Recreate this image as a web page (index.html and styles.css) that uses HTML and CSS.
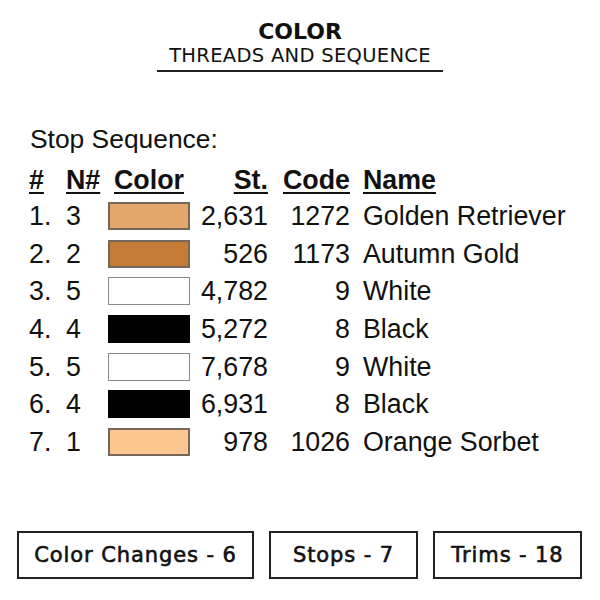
FILE: index.html
```html
<!DOCTYPE html>
<html>
<head>
<meta charset="utf-8">
<link rel="stylesheet" href="styles.css">
</head>
<body>
<div class="page">
  <header class="title">
    <div class="title-main">COLOR</div>
    <div class="title-sub">THREADS AND SEQUENCE</div>
  </header>
  <div class="label">Stop Sequence:</div>
  <div class="table">
    <div class="th c-num">#</div>
    <div class="th c-n">N#</div>
    <div class="th c-color">Color</div>
    <div class="th c-st">St.</div>
    <div class="th c-code">Code</div>
    <div class="th c-name">Name</div>

    <div class="c-num">1.</div><div class="c-n">3</div><div class="c-color"><span class="swatch golden"></span></div><div class="c-st">2,631</div><div class="c-code">1272</div><div class="c-name">Golden Retriever</div>
    <div class="c-num">2.</div><div class="c-n">2</div><div class="c-color"><span class="swatch autumn"></span></div><div class="c-st">526</div><div class="c-code">1173</div><div class="c-name">Autumn Gold</div>
    <div class="c-num">3.</div><div class="c-n">5</div><div class="c-color"><span class="swatch white"></span></div><div class="c-st">4,782</div><div class="c-code">9</div><div class="c-name">White</div>
    <div class="c-num">4.</div><div class="c-n">4</div><div class="c-color"><span class="swatch black"></span></div><div class="c-st">5,272</div><div class="c-code">8</div><div class="c-name">Black</div>
    <div class="c-num">5.</div><div class="c-n">5</div><div class="c-color"><span class="swatch white"></span></div><div class="c-st">7,678</div><div class="c-code">9</div><div class="c-name">White</div>
    <div class="c-num">6.</div><div class="c-n">4</div><div class="c-color"><span class="swatch black"></span></div><div class="c-st">6,931</div><div class="c-code">8</div><div class="c-name">Black</div>
    <div class="c-num">7.</div><div class="c-n">1</div><div class="c-color"><span class="swatch sorbet"></span></div><div class="c-st">978</div><div class="c-code">1026</div><div class="c-name">Orange Sorbet</div>
  </div>
  <div class="stats">
    <div class="stat wide">Color Changes - 6</div>
    <div class="stat">Stops - 7</div>
    <div class="stat">Trims - 18</div>
  </div>
</div>
</body>
</html>
```
FILE: styles.css
```css
html, body {
  margin: 0;
  padding: 0;
  background: #fff;
}
.page {
  width: 600px;
  height: 600px;
  color: #111;
  font-family: "Liberation Sans", Arial, sans-serif;
}
.title {
  width: 286px;
  margin: 0 auto;
  padding-top: 19px;
  padding-bottom: 3px;
  border-bottom: 2px solid #222;
  text-align: center;
  font-family: "DejaVu Sans", sans-serif;
}
.title-main {
  font-size: 22px;
  line-height: 25px;
  font-weight: 700;
}
.title-sub {
  font-size: 19.5px;
  line-height: 23px;
  font-weight: 400;
  letter-spacing: 0.3px;
}
.label {
  margin-top: 52px;
  padding-left: 30px;
  font-size: 26.4px;
  line-height: 30px;
}
.table {
  margin-top: 9px;
  padding-left: 29px;
  display: grid;
  grid-template-columns: 37px 42px 82px 78px 82px 1fr;
  grid-template-rows: 34px;
  grid-auto-rows: 37.7px;
  align-items: center;
  font-size: 26.8px;
  line-height: 30px;
}
.th {
  font-weight: 700;
  text-decoration: underline;
  text-decoration-thickness: 2px;
  text-underline-offset: 3px;
}
.c-color {
  display: flex;
  justify-content: center;
}
.c-st, .c-code {
  text-align: right;
}
.c-name {
  padding-left: 13px;
  white-space: nowrap;
}
.swatch {
  display: block;
  width: 82px;
  height: 28px;
  box-sizing: border-box;
  border: 2px solid #74685a;
}
.golden { background: #e3a66b; }
.autumn { background: #c47b35; }
.white { background: #fff; border-color: #8a8a8a; border-width: 1.5px; }
.black { background: #000; border-color: #000; }
.sorbet { background: #fdc58f; }
.stats {
  margin-top: 70px;
  padding-left: 17px;
  display: flex;
  gap: 15px;
  font-family: "DejaVu Sans", sans-serif;
}
.stat {
  width: 149px;
  height: 48px;
  box-sizing: border-box;
  border: 2px solid #222;
  display: flex;
  align-items: center;
  justify-content: center;
  font-size: 21px;
  font-weight: 400;
  letter-spacing: 0.9px;
  -webkit-text-stroke: 0.6px #111;
}
.stat.wide {
  width: 237px;
}
```
